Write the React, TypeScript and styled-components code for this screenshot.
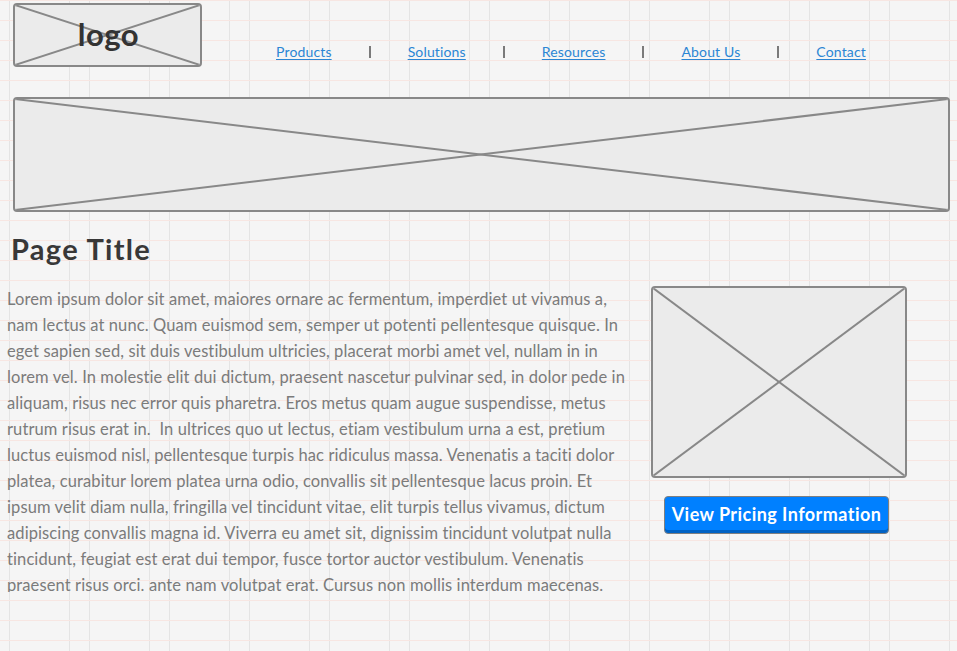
import React from "react";
import styled, { createGlobalStyle } from "styled-components";

const Global = createGlobalStyle`
  html, body { margin: 0; padding: 0; height: 100%; }
  body {
    background-color: #f5f5f5;
    background-image:
      linear-gradient(to bottom, #f7e6e2 1px, transparent 1px),
      linear-gradient(to right, #e4e4e4 1px, transparent 1px),
      linear-gradient(to right, #e4e4e4 1px, transparent 1px);
    background-size: 100% 20px, 80px 100%, 80px 100%;
    background-position: 0 0, 9px 0, 69px 0;
    font-family: Lato, "Open Sans", sans-serif;
    overflow: hidden;
  }
`;

const Page = styled.div`
  width: 957px;
  height: 651px;
  display: flex;
  flex-direction: column;
`;

const Header = styled.header`
  display: flex;
  align-items: flex-start;
  padding: 3px 0 0 13px;
`;

const Placeholder = styled.div<{ $w: number; $h: number }>`
  width: ${(p) => p.$w}px;
  height: ${(p) => p.$h}px;
  box-sizing: border-box;
  border: 2px solid #888888;
  border-radius: 4px;
  background: #ebebeb;
  overflow: hidden;
  display: grid;
  flex-shrink: 0;
  & > * { grid-area: 1 / 1; }
`;

const Cross = styled.svg`
  width: 100%;
  height: 100%;
  display: block;
`;

const LogoText = styled.span`
  align-self: center;
  justify-self: center;
  font-size: 31px;
  letter-spacing: 0.5px;
  font-weight: 700;
  color: #333333;
  line-height: 1;
  margin: -1px 0 0 2px;
`;

const Nav = styled.nav`
  display: flex;
  align-items: center;
  gap: 37px;
  margin: 40px 0 0 74px;
  height: 16px;
`;

const NavLink = styled.a`
  font-size: 14px;
  letter-spacing: 0.15px;
  color: #2b86d4;
  text-decoration: underline;
  text-underline-offset: 2px;
  cursor: pointer;
`;

const Sep = styled.span`
  width: 2px;
  height: 12px;
  background: #7a7a7a;
  margin-top: 2px;
`;

const Banner = styled.div`
  margin: 30px 0 0 13px;
`;

const Title = styled.h1`
  margin: 20px 0 0 11px;
  font-size: 29px;
  letter-spacing: 1.3px;
  line-height: 34px;
  font-weight: 700;
  color: #383838;
`;

const Content = styled.section`
  display: flex;
  align-items: flex-start;
  margin: 20px 0 0 7px;
  gap: 14px;
`;

const Body = styled.p`
  margin: 0;
  width: 630px;
  height: 306px;
  overflow: hidden;
  font-size: 16.5px;
  letter-spacing: 0.1px;
  line-height: 26px;
  color: #7b7b7b;
`;

const Line = styled.span`
  display: block;
  white-space: pre;
`;

const Aside = styled.div`
  display: flex;
  flex-direction: column;
  align-items: flex-start;
`;

const Button = styled.button`
  margin: 18px 0 0 13px;
  width: 225px;
  height: 38px;
  box-sizing: border-box;
  border: 1px solid #7f7f7f;
  border-radius: 4px;
  background: #0080ff;
  box-shadow: inset 0 -3px 0 #0062c4;
  color: #ffffff;
  font-family: Lato, sans-serif;
  font-size: 18px;
  letter-spacing: 0.45px;
  font-weight: 700;
  padding: 0 0 3px;
  white-space: nowrap;
  cursor: pointer;
`;

const X = () => (
  <Cross viewBox="0 0 100 100" preserveAspectRatio="none">
    <line x1="0" y1="0" x2="100" y2="100" stroke="#888" strokeWidth="2" vectorEffect="non-scaling-stroke" />
    <line x1="100" y1="0" x2="0" y2="100" stroke="#888" strokeWidth="2" vectorEffect="non-scaling-stroke" />
  </Cross>
);

const links = ["Products", "Solutions", "Resources", "About Us", "Contact"];

const lines = [
  "Lorem ipsum dolor sit amet, maiores ornare ac fermentum, imperdiet ut vivamus a,",
  "nam lectus at nunc. Quam euismod sem, semper ut potenti pellentesque quisque. In",
  "eget sapien sed, sit duis vestibulum ultricies, placerat morbi amet vel, nullam in in",
  "lorem vel. In molestie elit dui dictum, praesent nascetur pulvinar sed, in dolor pede in",
  "aliquam, risus nec error quis pharetra. Eros metus quam augue suspendisse, metus",
  "rutrum risus erat in.  In ultrices quo ut lectus, etiam vestibulum urna a est, pretium",
  "luctus euismod nisl, pellentesque turpis hac ridiculus massa. Venenatis a taciti dolor",
  "platea, curabitur lorem platea urna odio, convallis sit pellentesque lacus proin. Et",
  "ipsum velit diam nulla, fringilla vel tincidunt vitae, elit turpis tellus vivamus, dictum",
  "adipiscing convallis magna id. Viverra eu amet sit, dignissim tincidunt volutpat nulla",
  "tincidunt, feugiat est erat dui tempor, fusce tortor auctor vestibulum. Venenatis",
  "praesent risus orci. ante nam volutpat erat. Cursus non mollis interdum maecenas.",
];

export default function App() {
  return (
    <>
      <Global />
      <Page>
        <Header>
          <Placeholder $w={189} $h={64}>
            <X />
            <LogoText>logo</LogoText>
          </Placeholder>
          <Nav>
            {links.map((l, i) => (
              <React.Fragment key={l}>
                {i > 0 && <Sep />}
                <NavLink>{l}</NavLink>
              </React.Fragment>
            ))}
          </Nav>
        </Header>
        <Banner>
          <Placeholder $w={937} $h={115}>
            <X />
          </Placeholder>
        </Banner>
        <Title>Page Title</Title>
        <Content>
          <Body>
            {lines.map((l, i) => (
              <Line key={i}>{l}</Line>
            ))}
          </Body>
          <Aside>
            <Placeholder $w={256} $h={192}>
              <X />
            </Placeholder>
            <Button>View Pricing Information</Button>
          </Aside>
        </Content>
      </Page>
    </>
  );
}
